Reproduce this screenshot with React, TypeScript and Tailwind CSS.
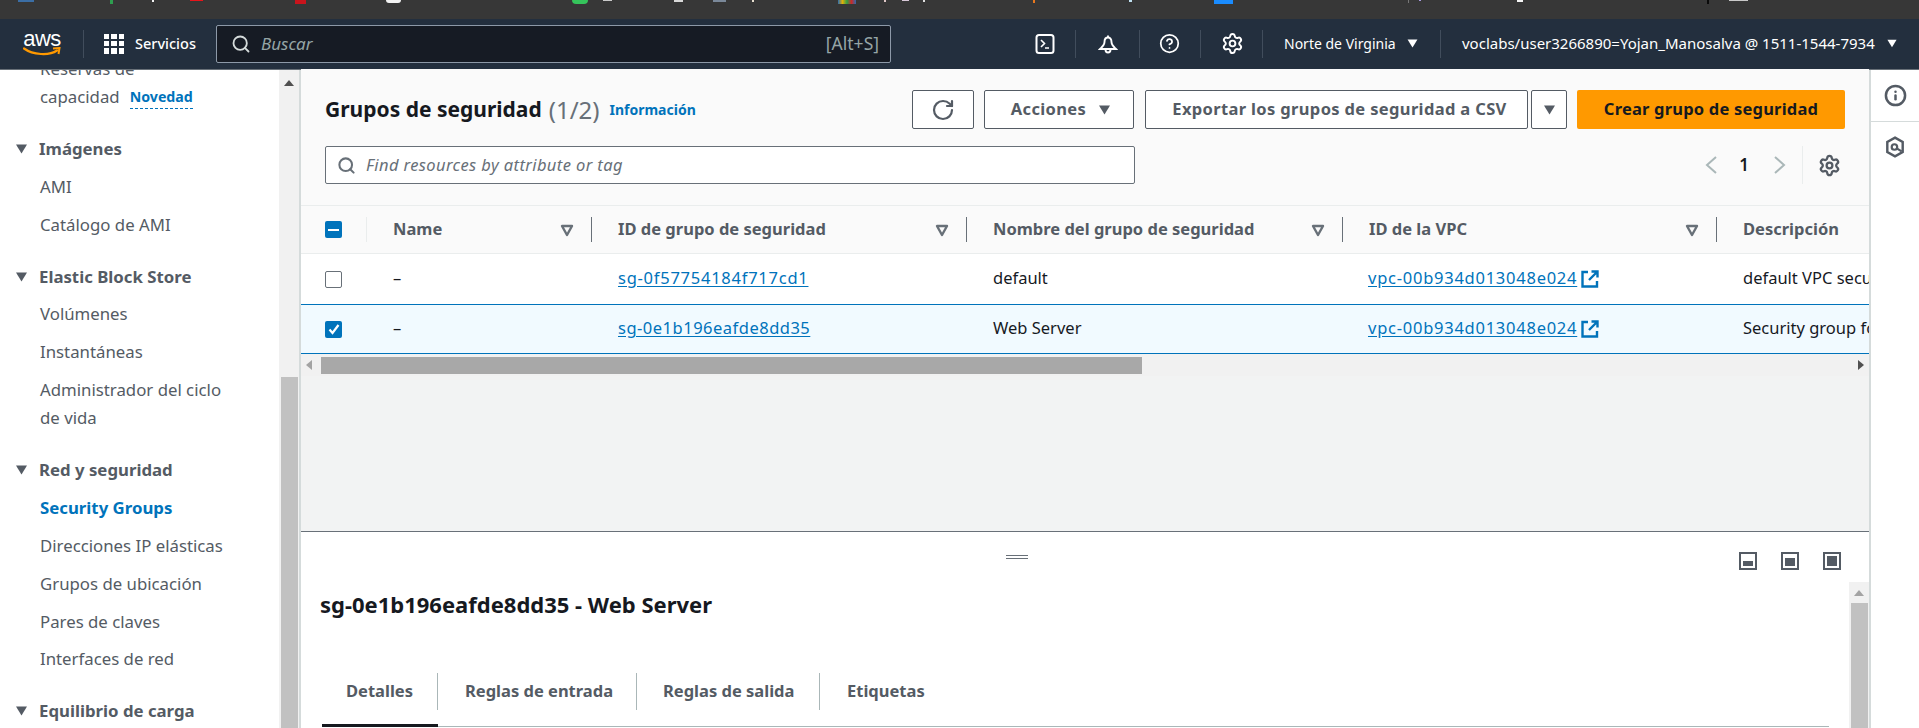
import { Search, RotateCw, Settings, CircleHelp, Info } from "lucide-react";

function Caret({ className }: { className: string }) {
  return (
    <svg viewBox="0 0 12 10" className={className} aria-hidden>
      <path d="M0.5 0.5h11L6 9.5z" fill="currentColor" />
    </svg>
  );
}

function SortIcon() {
  return (
    <svg viewBox="0 0 14 14" className="h-[14px] w-[14px] shrink-0 text-[#687078]" aria-hidden>
      <path d="M2 3h10L7 12z" fill="none" stroke="currentColor" strokeWidth="2.4" strokeLinejoin="round" />
    </svg>
  );
}

function ExternalIcon() {
  return (
    <svg viewBox="0 0 18 18" className="ml-[4px] h-[18px] w-[18px] shrink-0 text-[#0073bb]" aria-hidden>
      <path d="M7 2H1.500v14.500H16V11M10.500 1.500h6v6M16 2L8 10" fill="none" stroke="currentColor" strokeWidth="2.4" />
    </svg>
  );
}

function Box({ state }: { state: "none" | "some" | "all" }) {
  if (state === "none") {
    return <span className="block h-[17px] w-[17px] rounded-[2px] border border-[#687078] bg-white" />;
  }
  return (
    <span className="flex h-[17px] w-[17px] items-center justify-center rounded-[2px] bg-[#0073bb]">
      {state === "some" ? (
        <span className="h-[2px] w-[11px] bg-white" />
      ) : (
        <svg viewBox="0 0 14 14" className="h-[14px] w-[14px]" aria-hidden>
          <path d="M2.500 7.500l3 3.500 6-8" fill="none" stroke="white" strokeWidth="2.2" />
        </svg>
      )}
    </span>
  );
}

const NAV_SEP = "h-[28px] w-px bg-[#414d5c]";

function TopNav() {
  return (
    <header className="flex h-[51px] shrink-0 items-center border-b border-[#687078] bg-[#232f3e] pb-px text-white">
      <div className="ml-[23px] flex w-[38px] flex-col items-center">
        <span className="font-['Liberation_Sans',sans-serif] text-[22px] leading-[17px] tracking-[-0.5px]">aws</span>
        <svg viewBox="0 0 38 10" className="h-[10px] w-[38px]" aria-hidden>
          <path d="M1 1.500C10 8 26 9 34 3.500" fill="none" stroke="#ff9900" strokeWidth="2.2" strokeLinecap="round" />
          <path d="M30 1.500l6.500-.5-1 6" fill="none" stroke="#ff9900" strokeWidth="2" />
        </svg>
      </div>
      <span className="ml-[22px] h-[28px] w-px bg-[#414d5c]" />
      <span className="ml-[20px] grid h-[20px] w-[20px] grid-cols-3 gap-[2px]">
        {Array.from({ length: 9 }).map((_, i) => (
          <span key={i} className="bg-white" />
        ))}
      </span>
      <span className="ml-[11px] w-[70px] text-[14.500px] font-medium">Servicios</span>
      <div className="ml-[11px] flex h-[38px] w-[675px] items-center rounded-[2px] border border-[#8d99a8] bg-[#161b24] pl-[14px] pr-[11px]">
        <Search className="h-[20px] w-[20px] text-[#d5dbdb]" strokeWidth={2.2} />
        <span className="ml-[10px] text-[17px] italic text-[#95a5a6]">Buscar</span>
        <span className="ml-auto text-[17.500px] text-[#95a5a6]">[Alt+S]</span>
      </div>
      <svg viewBox="0 0 20 20" className="ml-[144px] h-[20px] w-[20px]" aria-hidden>
        <rect x="1.500" y="1" width="17" height="18" rx="2.500" fill="none" stroke="white" strokeWidth="2" />
        <path d="M6 6l3.500 3.500L6 13M10 14h4" fill="none" stroke="white" strokeWidth="1.600" />
      </svg>
      <span className={`ml-[20px] ${NAV_SEP}`} />
      <svg viewBox="0 0 20 20" className="ml-[22px] h-[20px] w-[20px]" aria-hidden>
        <path d="M10 1.500v2M6.500 8c0-3 1.500-4.500 3.500-4.500S13.500 5 13.500 8c0 3 2 4.500 4.500 7H2c2.500-2.500 4.500-4 4.500-7zM7.500 15.500c0 2 1 3 2.500 3s2.500-1 2.500-3" fill="none" stroke="white" strokeWidth="1.900" />
      </svg>
      <span className={`ml-[21px] ${NAV_SEP}`} />
      <CircleHelp className="ml-[19px] h-[21px] w-[21px]" strokeWidth={2} />
      <span className={`ml-[20px] ${NAV_SEP}`} />
      <Settings className="ml-[20px] h-[23px] w-[23px]" strokeWidth={2} />
      <span className={`ml-[18px] ${NAV_SEP}`} />
      <span className="ml-[21px] w-[116px] whitespace-nowrap text-[14px]">Norte de Virginia</span>
      <Caret className="ml-[7px] h-[9px] w-[11px]" />
      <span className={`ml-[22px] ${NAV_SEP}`} />
      <span className="ml-[21px] w-[417px] whitespace-nowrap text-[15px]">voclabs/user3266890=Yojan_Manosalva @ 1511-1544-7934</span>
      <Caret className="ml-[8px] h-[9px] w-[10px]" />
    </header>
  );
}

function NavItem({ label, active }: { label: string; active?: boolean }) {
  return (
    <div className={active ? "py-[4.950px] pl-[40px] text-[16.800px] font-bold leading-[28px] text-[#0073bb]" : "py-[4.950px] pl-[40px] text-[16.800px] leading-[28px] text-[#545b64]"}>
      {label}
    </div>
  );
}

function NavGroup({ title, children }: { title: string; children?: React.ReactNode }) {
  return (
    <div className="mt-[14px]">
      <div className="flex items-center py-[4.950px] leading-[28px] text-[#545b64]">
        <Caret className="ml-[15px] h-[10px] w-[13px]" />
        <span className="ml-[11px] text-[16.800px] font-bold">{title}</span>
      </div>
      {children}
    </div>
  );
}

function Sidebar() {
  return (
    <aside className="flex w-[279px] shrink-0 flex-col overflow-hidden bg-white">
      <div className="-mt-[15px]">
        <div className="pl-[40px] text-[16.800px] leading-[28px] text-[#545b64]">Reservas de</div>
        <div className="flex pb-[5px] pl-[40px] text-[16.800px] leading-[28px] text-[#545b64]">
          capacidad
          <span className="ml-[10px] h-[26px] border-b border-dashed border-[#0073bb] text-[14.200px] font-bold text-[#0073bb]">Novedad</span>
        </div>
        <NavGroup title="Imágenes">
          <NavItem label="AMI" />
          <NavItem label="Catálogo de AMI" />
        </NavGroup>
        <NavGroup title="Elastic Block Store">
          <NavItem label="Volúmenes" />
          <NavItem label="Instantáneas" />
          <div className="py-[4.950px] pl-[40px] text-[16.800px] leading-[28px] text-[#545b64]">
            Administrador del ciclo
            <br />
            de vida
          </div>
        </NavGroup>
        <NavGroup title="Red y seguridad">
          <NavItem label="Security Groups" active />
          <NavItem label="Direcciones IP elásticas" />
          <NavItem label="Grupos de ubicación" />
          <NavItem label="Pares de claves" />
          <NavItem label="Interfaces de red" />
        </NavGroup>
        <NavGroup title="Equilibrio de carga" />
      </div>
    </aside>
  );
}

function SidebarScroll() {
  return (
    <div className="flex w-[22px] shrink-0 flex-col items-center border-r-2 border-[#d5dbdb] bg-[#f1f1f1]">
      <svg viewBox="0 0 10 6" className="mt-[10px] h-[6px] w-[10px] text-[#505050]" aria-hidden>
        <path d="M5 0l5 6H0z" fill="currentColor" />
      </svg>
      <div className="mt-auto h-[351px] w-[17px] bg-[#c1c1c1]" />
    </div>
  );
}

function Chevron({ dir }: { dir: "left" | "right" }) {
  return (
    <svg viewBox="0 0 12 18" className="h-[18px] w-[12px] text-[#aab7b8]" aria-hidden>
      <path d={dir === "left" ? "M11 1L2 9l9 8" : "M1 1l9 8-9 8"} fill="none" stroke="currentColor" strokeWidth="2" />
    </svg>
  );
}

const BTN = "flex h-[39px] items-center justify-center rounded-[2px] border border-[#545b64] bg-white text-[16.500px] font-bold tracking-[0.35px] text-[#545b64]";

function TableTop() {
  return (
    <div className="h-[136px] shrink-0 bg-[#fafafa] pl-[24px] pr-[24px] pt-[21px]">
      <div className="flex h-[39px] items-center">
        <h1 className="text-[21px] font-bold leading-none text-[#16191f]">Grupos de seguridad</h1>
        <span className="ml-[7px] text-[24px] leading-none text-[#687078]">(1/2)</span>
        <span className="ml-[10px] text-[14px] font-bold text-[#0073bb]">Información</span>
        <button className={`${BTN} ml-auto w-[62px]`}>
          <RotateCw className="h-[24px] w-[24px]" strokeWidth={2.2} />
        </button>
        <button className={`${BTN} ml-[10px] w-[150px] gap-[12px] pl-[4px]`}>
          Acciones
          <Caret className="h-[10px] w-[13px]" />
        </button>
        <button className={`${BTN} ml-[11px] w-[383px] pl-[6px]`}>Exportar los grupos de seguridad a CSV</button>
        <button className={`${BTN} ml-[3px] w-[36px]`}>
          <Caret className="h-[10px] w-[13px]" />
        </button>
        <button className="ml-[10px] flex h-[39px] w-[268px] items-center justify-center rounded-[2px] bg-[#ff9900] text-[16.500px] font-bold tracking-[0.2px] text-[#16191f]">
          Crear grupo de seguridad
        </button>
      </div>
      <div className="mt-[17px] flex h-[38px] items-center">
        <div className="flex h-[38px] w-[810px] items-center rounded-[2px] border border-[#687078] bg-white pl-[11px]">
          <Search className="h-[19px] w-[19px] text-[#687078]" strokeWidth={2.6} />
          <span className="ml-[10px] text-[16.500px] italic tracking-[0.4px] text-[#687078]">Find resources by attribute or tag</span>
        </div>
        <div className="ml-auto">
          <Chevron dir="left" />
        </div>
        <span className="ml-[22.500px] text-[17px] font-semibold text-[#16191f]">1</span>
        <div className="ml-[25px]">
          <Chevron dir="right" />
        </div>
        <span className="ml-[16px] h-[38px] w-px bg-[#eaeded]" />
        <Settings className="ml-[15px] mr-[4px] h-[23px] w-[23px] text-[#545b64]" strokeWidth={2.4} />
      </div>
    </div>
  );
}

const COLS = "grid grid-cols-[66px_225px_375px_376px_374px_1fr]";

function HeadCell({ label, last }: { label: string; last?: boolean }) {
  return (
    <div className="flex h-[25px] items-center whitespace-nowrap pl-[26px] pr-[17px] text-[16.500px] font-bold text-[#545b64]">
      <span>{label}</span>
      {!last && (
        <>
          <span className="ml-auto" />
          <SortIcon />
        </>
      )}
    </div>
  );
}

function Row({ sg, name, desc, selected }: { sg: string; name: string; desc: string; selected?: boolean }) {
  return (
    <div
      className={
        selected
          ? `${COLS} h-[50px] items-center overflow-hidden whitespace-nowrap border-y border-[#0073bb] bg-[#f1faff] text-[16.500px] text-[#16191f]`
          : `${COLS} h-[50px] items-center overflow-hidden whitespace-nowrap bg-white text-[16.500px] text-[#16191f]`
      }
    >
      <div className="pl-[24px]">
        <Box state={selected ? "all" : "none"} />
      </div>
      <div className="mb-[2px] pl-[26px]">–</div>
      <div className={selected ? "mb-[2px] pl-[26px] tracking-[0.5px] text-[#0073bb] underline underline-offset-2" : "mb-[2px] pl-[26px] tracking-[0.75px] text-[#0073bb] underline underline-offset-2"}>{sg}</div>
      <div className="mb-[2px] pl-[26px]">{name}</div>
      <div className="flex items-center pl-[25px]">
        <span className="mb-[2px] tracking-[0.75px] text-[#0073bb] underline underline-offset-2">vpc-00b934d013048e024</span>
        <ExternalIcon />
      </div>
      <div className="mb-[2px] pl-[26px]">{desc}</div>
    </div>
  );
}

function Table() {
  return (
    <div className="shrink-0 overflow-hidden border-t border-[#eaeded]">
      <div className={`${COLS} h-[48px] items-center border-b border-[#eaeded] bg-[#fafafa]`}>
        <div className="flex h-[25px] items-center border-r border-[#eaeded] pl-[24px]">
          <Box state="some" />
        </div>
        <div className="border-r border-[#687078]">
          <HeadCell label="Name" />
        </div>
        <div className="border-r border-[#687078]">
          <HeadCell label="ID de grupo de seguridad" />
        </div>
        <div className="border-r border-[#687078]">
          <HeadCell label="Nombre del grupo de seguridad" />
        </div>
        <div className="border-r border-[#687078]">
          <HeadCell label="ID de la VPC" />
        </div>
        <HeadCell label="Descripción" last />
      </div>
      <Row sg="sg-0f57754184f717cd1" name="default" desc="default VPC security group" />
      <Row sg="sg-0e1b196eafde8dd35" name="Web Server" desc="Security group for web" selected />
    </div>
  );
}

function HScroll() {
  return (
    <div className="flex h-[22px] shrink-0 items-center bg-[#f1f1f1] pl-[5px] pr-[5px]">
      <svg viewBox="0 0 6 10" className="h-[10px] w-[6px] text-[#a3a3a3]" aria-hidden>
        <path d="M0 5l6-5v10z" fill="currentColor" />
      </svg>
      <div className="ml-[9px] h-[17px] w-[821px] bg-[#a8a8a8]" />
      <svg viewBox="0 0 6 10" className="ml-auto h-[10px] w-[6px] text-[#505050]" aria-hidden>
        <path d="M6 5L0 0v10z" fill="currentColor" />
      </svg>
    </div>
  );
}

function SizeIcon({ fill }: { fill: "low" | "mid" | "full" }) {
  return (
    <svg viewBox="0 0 18 18" className="h-[18px] w-[18px]" aria-hidden>
      <rect x="1" y="1" width="16" height="16" fill="none" stroke="#545b64" strokeWidth="2" />
      {fill === "low" && <rect x="4" y="9" width="10" height="5" fill="#545b64" />}
      {fill === "mid" && <rect x="4" y="6" width="10" height="8" fill="#545b64" />}
      {fill === "full" && <rect x="4" y="4" width="10" height="10" fill="#545b64" />}
    </svg>
  );
}

const TAB = "flex h-[37px] items-center border-r border-[#aab7b8] text-[16.500px] font-bold text-[#545b64]";

function DetailPanel() {
  return (
    <section className="flex h-[197px] shrink-0 flex-col border-t border-[#687078] bg-white">
      {/* handle + size buttons */}
      <div className="flex h-[50px] shrink-0 items-start">
        <div className="ml-[705px] mt-[23px] flex flex-col gap-[2px]">
          <span className="h-px w-[22px] bg-[#687078]" />
          <span className="h-px w-[22px] bg-[#687078]" />
        </div>
        <div className="ml-auto mt-[20px] flex gap-[24px] pr-[28px]">
          <SizeIcon fill="low" />
          <SizeIcon fill="mid" />
          <SizeIcon fill="full" />
        </div>
      </div>
      <div className="flex min-h-0 flex-1">
        <div className="min-w-0 flex-1 pl-[19px]">
          <h2 className="mt-[6px] text-[22px] font-bold leading-[32px] text-[#16191f]">sg-0e1b196eafde8dd35 - Web Server</h2>
          <div className="relative ml-[2px] mr-[20px] mt-[53px] flex h-[54px] items-start border-b border-[#aab7b8]">
            <div className="w-[116px]">
              <div className={`${TAB} pl-[24px] text-[#0073bb]`}>Detalles</div>
              <span className="absolute left-0 top-[51px] h-[3px] w-[116px] bg-[#16191f]" />
            </div>
            <div className={`${TAB} w-[199px] pl-[27px]`}>Reglas de entrada</div>
            <div className={`${TAB} w-[183px] pl-[26px]`}>Reglas de salida</div>
            <div className="flex h-[37px] items-center pl-[27px] text-[16.500px] font-bold text-[#545b64]">Etiquetas</div>
          </div>
        </div>
        <div className="flex w-[20px] shrink-0 flex-col items-center bg-[#f1f1f1]">
          <svg viewBox="0 0 10 6" className="mt-[8px] h-[6px] w-[10px] text-[#a3a3a3]" aria-hidden>
            <path d="M5 0l5 6H0z" fill="currentColor" />
          </svg>
          <div className="ml-[1px] mt-[7px] w-[17px] flex-1 bg-[#c1c1c1]" />
        </div>
      </div>
    </section>
  );
}

function RightRail() {
  return (
    <aside className="flex w-[50px] shrink-0 flex-col items-center border-l-2 border-[#d5dbdb] bg-white">
      <div className="flex h-[52px] w-full items-center justify-center border-b border-[#d5dbdb]">
        <Info className="h-[23px] w-[23px] text-[#545b64]" strokeWidth={2.6} />
      </div>
      <svg viewBox="0 0 20 20" className="mt-[14px] h-[22px] w-[22px]" aria-hidden>
        <path d="M10 1.500l7 4v9l-7 4-7-4v-9z" fill="none" stroke="#545b64" strokeWidth="2.2" />
        <circle cx="9.500" cy="10" r="2.500" fill="none" stroke="#545b64" strokeWidth="2" />
        <path d="M12 11.500l4 2.500" stroke="#545b64" strokeWidth="2" />
      </svg>
    </aside>
  );
}

const TAB_BITS = [
  "ml-[18px] h-[2px] w-[16px] bg-[#3b6ea5]",
  "ml-[76px] h-[4px] w-[3px] bg-[#2e9e4f]",
  "ml-[39px] h-[2px] w-[2px] bg-[#f5f5f5]",
  "ml-[36px] h-[1px] w-[13px] bg-[#e8141a]",
  "ml-[92px] h-[4px] w-[11px] bg-[#c8141c]",
  "ml-[80px] h-[3px] w-[15px] rounded-b-full bg-[#f2f2f2]",
  "ml-[171px] h-[4px] w-[16px] rounded-b-full bg-[#35c45b]",
  "ml-[15px] h-[1px] w-[9px] bg-[#c9c9c9]",
  "ml-[62px] h-[2px] w-[9px] bg-[#d9d9d9]",
  "ml-[30px] h-[2px] w-[13px] bg-[#7a8899]",
  "ml-[26px] h-[2px] w-[2px] bg-[#e8e0d0]",
  "ml-[84px] h-[4px] w-[18px] bg-[linear-gradient(90deg,#2b6cb0,#e2b007,#2f9e44,#c92a2a,#2b6cb0)]",
  "ml-[28px] h-[2px] w-[2px] bg-[#e0c8c8]",
  "ml-[16px] h-[1px] w-[7px] bg-[#d8c8d8]",
  "ml-[14px] h-[2px] w-[2px] bg-[#e0e0e0]",
  "ml-[108px] h-[3px] w-[2px] bg-[#e8781e]",
  "ml-[94px] h-[2px] w-[3px] bg-[#bfe0f0]",
  "ml-[82px] h-[4px] w-[19px] bg-[#1a8cff]",
  "ml-[175px] h-[3px] w-[1px] bg-[#777777]",
  "ml-[10px] h-[1px] w-[2px] bg-[#a99be0]",
  "ml-[96px] h-[2px] w-[6px] bg-[#f5f5f5]",
  "ml-[184px] h-[4px] w-[2px] bg-[#0a0a0a]",
  "ml-[20px] h-[1px] w-[19px] bg-[#c9c9c9]",
];

export default function App() {
  return (
    <div className="flex h-[728px] w-[1919px] flex-col overflow-hidden bg-white font-['Noto_Sans',sans-serif]">
      <div className="flex h-[19px] shrink-0 items-start bg-[#373737]">
        {TAB_BITS.map((c) => (
          <span key={c} className={c} />
        ))}
      </div>
      <TopNav />
      <div className="flex min-h-0 flex-1">
        <Sidebar />
        <SidebarScroll />
        <main className="-mt-px flex w-[1568px] shrink-0 flex-col">
          <TableTop />
          <Table />
          <HScroll />
          <div className="flex-1 bg-[#f2f3f3]" />
          <DetailPanel />
        </main>
        <RightRail />
      </div>
    </div>
  );
}
